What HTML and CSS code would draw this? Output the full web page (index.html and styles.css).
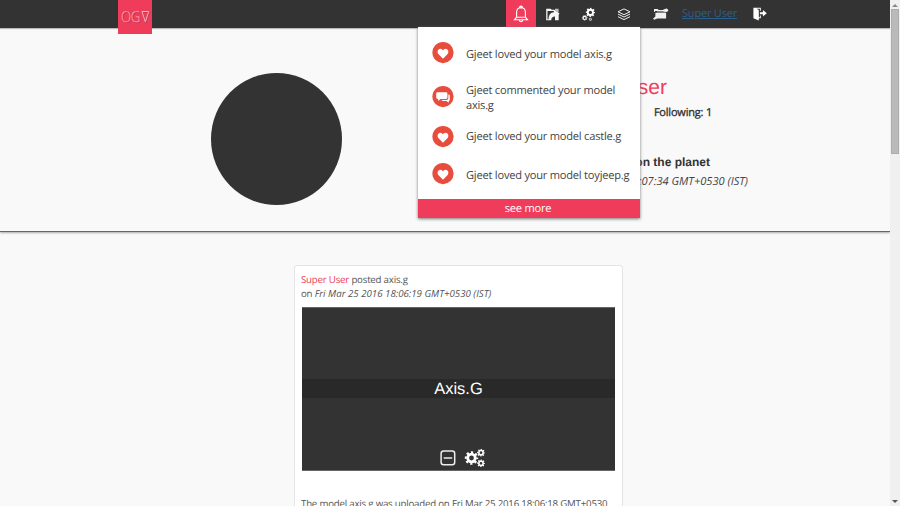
FILE: index.html
```html
<!DOCTYPE html>
<html lang="en">
<head>
<meta charset="utf-8">
<title>OGV</title>
<link rel="stylesheet" href="styles.css">
</head>
<body>
<svg class="defs" width="0" height="0">
  <symbol id="gear" viewBox="0 0 20 20">
    <circle cx="10" cy="10" r="5.4" fill="none" stroke="currentColor" stroke-width="4"/>
    <circle cx="10" cy="10" r="8.2" fill="none" stroke="currentColor" stroke-width="3.2" pathLength="80" stroke-dasharray="5 5" stroke-dashoffset="2.5"/>
  </symbol>
  <symbol id="heart" viewBox="0 0 22 22">
    <circle cx="11" cy="10.600" r="10.6" fill="#e84c3d"/>
    <path fill="#fff" d="M11 16.8 6.6 12.3C4.8 10.3 5.6 6.8 8.3 6.7c1.4 0 2.3.9 2.7 1.9.4-1 1.300-1.900 2.700-1.900 2.700.1 3.500 3.600 1.700 5.600Z"/>
  </symbol>
  <symbol id="comments" viewBox="0 0 22 22">
    <circle cx="11" cy="10.600" r="10.6" fill="#e84c3d"/>
    <path fill="#fff" d="M5.500 6.300h8.600q1.300 0 1.300 1.300v4q0 1.300-1.300 1.300H8.600L6.200 15v-2.100H5.500q-1.300 0-1.300-1.300v-4q0-1.300 1.300-1.300ZM16.300 8.500q1.500 0 1.500 1.300v3.600q0 1.300-1 1.300v2L14.500 14.900h-3.700q-.8 0-1.200-1h5q1.700 0 1.700-1.700Z"/>
  </symbol>
</svg>
<div class="window">
  <div class="page">
    <nav class="nav">
      <a class="logo"><span>OG</span><svg width="9" height="14" viewBox="0 0 9 14" fill="none"><path d="M1.600 2.100h6.700L5 12.500Z" stroke="#83303f" opacity=".5"/><path d="M1 1.500h6.700L4.400 11.900Z" stroke="#f5b5bd"/></svg></a>
      <div class="menu">
        <a class="item active"><svg width="16" height="18" viewBox="0 0 16 18" fill="none" stroke="#fff" stroke-width="1.100"><path d="M8 1.200v1.600M3.600 12.200V7.300q0-4.400 4.400-4.500 4.400.1 4.400 4.500v4.900l2.100 2.500h-13ZM6.200 14.800q0 1.800 1.800 1.800t1.800-1.800M6.500 2.700q0-1.700 1.500-1.700t1.500 1.700M3.600 12.300h8.800"/></svg></a>
        <a class="item share"><svg width="14" height="13" viewBox="0 0 14 13" fill="#f5f5f5"><path d="M.2.800h4.600l.8 1H8v1.300H1.500v8.200h1.100c0-4 1.800-6.900 5.300-7V1.600l5.700 3.900-.9.900v5.800H9V8.500c-2.200-.1-3.700 1.200-3.800 3.700H.2Z"/><path d="M9 .8h3.600v3.500h-1L9 2.200Z" opacity=".7"/></svg></a>
        <a class="item gears"><svg width="15" height="15" viewBox="0 0 15 15"><use href="#gear" x="4.600" y=".6" width="9.600" height="9.600"/><use href="#gear" x=".8" y="8" width="5.800" height="5.800"/><use href="#gear" x="7.600" y="10.500" width="3.600" height="3.600"/></svg></a>
        <a class="item layers"><svg width="14" height="13" viewBox="0 0 14 13" fill="none" stroke="#eee" stroke-width="1"><path d="m7 .9 6 2.900-6 2.900-6-2.900ZM1 6.100 7 9l6-2.900M1 8.700l6 2.900 6-2.900"/></svg></a>
        <a class="item folder"><svg width="16" height="12" viewBox="0 0 16 12" fill="#f0f0f0"><path d="M1 1h3.800l.7.900h5.700v1H1.900v1H1ZM2.400 4.800h10.700v5.700H4.300L1.200 11.700 0 10.800l2.400-2.400Z"/><circle cx="13.300" cy="2.200" r="1.800"/><path d="M4 3.500h8.500v.8H4ZM10.500 1h3v3h-3Z" opacity=".8"/></svg></a>
        <a class="user">Super User</a>
        <a class="item exit"><svg width="14" height="14" viewBox="0 0 14 14" fill="#fff"><path d="M.4.800h7.400v3H6.900v-2H3.600L5.800 3v7.300h1.100V8.500h.9v2.800h-2v2.300L.4 11.200ZM6.900 5.300h3V3L13.800 6.300 9.900 9.500V7.300h-3Z"/></svg></a>
      </div>
      <div class="dropdown">
        <div class="note n1"><svg width="22" height="22"><use href="#heart"/></svg><p>Gjeet loved your model axis.g</p></div>
        <div class="note n2"><svg width="22" height="22"><use href="#comments"/></svg><p>Gjeet commented your model<br>axis.g</p></div>
        <div class="note n3"><svg width="22" height="22"><use href="#heart"/></svg><p>Gjeet loved your model castle.g</p></div>
        <div class="note n4"><svg width="22" height="22"><use href="#heart"/></svg><p>Gjeet loved your model toyjeep.g</p></div>
        <a class="more">see more</a>
      </div>
    </nav>
    <header class="profile">
      <div class="avatar"></div>
      <div class="about">
        <h1>Super User</h1>
        <div class="following">Following: 1</div>
        <h2>on the planet</h2>
        <em class="since">18:07:34 GMT+0530 (IST)</em>
      </div>
    </header>
    <main class="feed">
      <article class="post">
        <div class="byline"><a>Super User</a> posted axis.g<br>on <em>Fri Mar 25 2016 18:06:19 GMT+0530 (IST)</em></div>
        <div class="preview">
          <div class="title">Axis.G</div>
          <div class="tools">
            <svg width="16" height="16" viewBox="0 0 16 16" fill="none" stroke="#eee" stroke-width="1.500"><rect x="1.100" y="1.100" width="13.600" height="13.600" rx="2.500"/><path d="M3.700 8h8.500"/></svg>
            <svg width="22" height="20" viewBox="0 0 22 20"><use href="#gear" x=".5" y="3" width="14" height="14"/><use href="#gear" x="13" y=".7" width="8" height="8"/><use href="#gear" x="13" y="11.300" width="8" height="8"/></svg>
          </div>
        </div>
        <p class="desc">The model axis.g was uploaded on Fri Mar 25 2016 18:06:18 GMT+0530</p>
      </article>
    </main>
  </div>
  <div class="scrollbar"><i class="up"></i><div class="thumb"></div><i class="down"></i></div>
</div>
</body>
</html>
```
FILE: styles.css
```css
* { box-sizing: border-box; }
body { margin: 0; font-family: "Open Sans", sans-serif; color: #444; overflow: hidden; text-rendering: geometricPrecision; }
h1, h2, p { margin: 0; font-weight: normal; }
svg { display: block; flex: none; }
.defs { position: absolute; }
.window { display: flex; height: 506px; background: #f9f9f9; }
.page { width: 890px; height: 506px; overflow: hidden; }
.nav { position: relative; z-index: 2; display: flex; height: 28px; background: #333; padding-left: 118px; color: #fff; box-shadow: 0 1px 1px #bbb; }
.logo { display: flex; align-items: center; width: 34px; height: 34px; background: #f03c5b; color: #f5b5bd; padding-left: 3px; }
.logo span { width: 20px; font: 300 15px/34px "Open Sans", sans-serif; letter-spacing: -.5px; text-shadow: 1px 1px 0 #c23650; transform: scaleX(.88); transform-origin: 0 50%; }
.menu { display: flex; align-items: center; margin-left: 354px; height: 28px; }
.item { display: flex; align-items: center; justify-content: center; height: 28px; }
.active { width: 30px; background: #f03c5b; }
.share { width: 34px; }
.gears { width: 37px; }
.layers { width: 34px; }
.folder { width: 39px; }
.user { width: 55px; margin-left: 2px; font-size: 11px; letter-spacing: -.2px; line-height: 27px; height: 28px; color: #2c5f88; text-decoration: underline; white-space: nowrap; }
.exit { width: 45px; }
.dropdown { position: absolute; left: 418px; top: 27px; width: 222px; height: 191px; background: #fff; box-shadow: 0 1px 3px #777; color: #444; font-size: 11.1px; letter-spacing: -.22px; line-height: 15px; }
.note { display: flex; align-items: center; gap: 12px; padding-left: 14px; white-space: nowrap; }
.n1 { height: 52px; }
.n2 { height: 36px; }
.n3 { height: 43px; }
.n4 { height: 31px; }
.n1 p, .n2 p { margin-top: 2px; }
.n4 p { margin-top: 3px; }
.more { display: block; margin-top: 10px; height: 19px; background: #f03c5b; color: #fff; text-align: center; line-height: 19px; padding-right: 2px; }
.profile { display: flex; height: 204px; border-bottom: 1px solid #666; box-shadow: 0 1px 2px #aaa; padding-left: 211px; }
.avatar { width: 131px; height: 132px; margin-top: 45px; border-radius: 50%; background: #333; }
.about { display: flex; flex-direction: column; align-items: flex-end; width: 406px; padding-top: 47px; white-space: nowrap; color: #333; }
.about h1 { font: 21px/26px "Liberation Sans", sans-serif; color: #f03c5b; margin-right: 81px; }
.following { font-size: 11px; letter-spacing: -.2px; line-height: 16px; margin: 4px 36px 0 0; -webkit-text-stroke: .35px #333; }
.about h2 { font: bold 12px/16px "Liberation Sans", sans-serif; margin: 33px 38px 0 0; }
.since { font-size: 11.1px; line-height: 16px; margin-top: 4px; color: #444; }
.feed { padding: 33px 0 0 294px; }
.post { width: 329px; height: 260px; background: #fff; border: 1px solid #e4e4e4; border-radius: 3px; padding: 7px 7px 0 6px; font-size: 9.7px; letter-spacing: -.21px; line-height: 14px; color: #555; white-space: nowrap; }
.byline a { color: #f03c5b; }
.byline em { letter-spacing: 0; }
.preview { display: flex; flex-direction: column; height: 164px; margin: 6px 0 0 1px; background: #333; border: 1px solid #666; border-width: 1px 0; color: #fff; letter-spacing: 0; }
.title { margin-top: 71px; height: 19px; background: #292929; text-align: center; font: 16.5px/20px "Liberation Sans", sans-serif; }
.tools { display: flex; align-items: center; justify-content: center; gap: 8px; margin: 50px 0 0 8px; height: 20px; }
.desc { margin-top: 26px; }
.scrollbar { display: flex; flex-direction: column; align-items: center; width: 10px; background: #f0f0f0; }
.thumb { width: 8px; height: 145px; margin-top: 2px; background: #bababa; border: 1px solid #adadad; }
.up { margin-top: 4px; border: solid transparent; border-width: 0 3px 3px; border-bottom-color: #888; }
.down { margin: auto 0 3px; border: solid transparent; border-width: 3px 3px 0; border-top-color: #555; }
```
